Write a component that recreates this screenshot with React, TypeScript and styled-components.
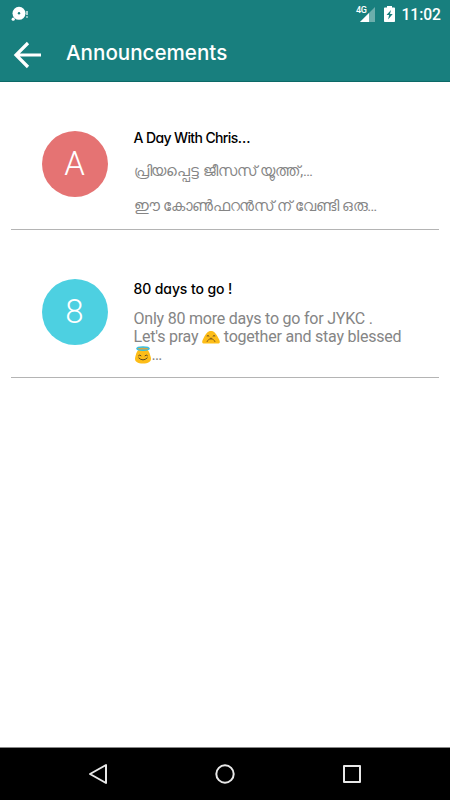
import React from 'react';
import styled, { createGlobalStyle } from 'styled-components';

const GlobalStyle = createGlobalStyle`
  * { box-sizing: border-box; }
  body { margin: 0; background: #fff; font-family: Roboto, sans-serif; }
`;

const Screen = styled.div`
  width: 450px;
  height: 800px;
  display: flex;
  flex-direction: column;
  overflow: hidden;
  background: #fff;
`;

const Header = styled.header`
  height: 82px;
  flex: none;
  background: #187f7e;
  border-bottom: 1px solid #0c6967;
  color: #fff;
`;

const StatusBar = styled.div`
  height: 28px;
  display: flex;
  align-items: center;
  padding: 0 9px 0 11px;
`;

const StatusIcons = styled.div`
  margin-left: auto;
  display: flex;
  align-items: center;
`;

const Network = styled.span`
  font-size: 9px;
  line-height: 9px;
  font-weight: 500;
  letter-spacing: -0.4px;
  margin: -7px -6px 0 0;
`;

const Battery = styled.svg`
  margin-left: 9px;
`;

const Clock = styled.time`
  font-size: 15.6px;
  line-height: 28px;
  font-weight: 500;
  margin: 1px 0 0 6px;
`;

const Toolbar = styled.div`
  height: 53px;
  display: flex;
  align-items: center;
  padding-left: 13px;
`;

const BackButton = styled.button`
  display: flex;
  padding: 0;
  border: 0;
  background: none;
  color: inherit;
`;

const Title = styled.h1`
  margin: -3px 0 0 24px;
  font: 500 20.6px/28px Inter, sans-serif;
`;

const List = styled.main`
  flex: 1;
  padding: 0 11px;
`;

const Row = styled.article`
  height: 148px;
  display: flex;
  padding-left: 30.5px;
  border-bottom: 1px solid #b4b4b4;
`;

const Avatar = styled.div<{ $color: string }>`
  width: 66px;
  height: 66px;
  flex: none;
  margin-top: 48.7px;
  border-radius: 50%;
  background: ${({ $color }) => $color};
  color: #fff;
  display: flex;
  align-items: center;
  justify-content: center;
  font-size: 33px;
  font-weight: 300;
`;

const Content = styled.div`
  margin-left: 26px;
  color: #858585;
`;

const Subject = styled.h2<{ $top: number; $spacing: number }>`
  margin: ${({ $top }) => $top}px 0 0;
  font: 500 14px/20px Inter, sans-serif;
  font-feature-settings: 'cv11';
  letter-spacing: ${({ $spacing }) => $spacing}px;
  color: #000;
`;

const Malayalam = styled.p<{ $size: number; $gap: number; $spacing: number }>`
  margin: ${({ $gap }) => $gap}px 0 0;
  font-size: ${({ $size }) => $size}px;
  line-height: 20px;
  letter-spacing: ${({ $spacing }) => $spacing}px;
  white-space: nowrap;
`;

const Message = styled.p`
  margin: 11px 0 0;
  font-size: 16px;
  line-height: 18px;
  letter-spacing: -0.22px;
  white-space: nowrap;
`;

const Emoji = styled.svg`
  display: inline-block;
  width: 18px;
  height: 18px;
  vertical-align: -4px;
`;

const NavBar = styled.nav`
  height: 53px;
  flex: none;
  display: flex;
  align-items: center;
  justify-content: space-between;
  padding: 0 87px;
  background: #000;
  border-top: 1px solid #888;
`;

const PrayEmoji = () => (
  <Emoji viewBox="0 0 18 18" role="img" aria-label="🙏">
    <path d="M9 3c3.200 0 5.200 2.500 7.600 7.500 2 3.900 1.400 5-1 5H2.400c-2.400 0-3-1.100-1-5C3.800 5.500 5.800 3 9 3Z" fill="#fdbd18" />
    <path d="M4.800 8.100q1.300-1 2.400.2M10.800 8.300q1.100-1.200 2.400-.2" fill="none" stroke="#543b20" strokeWidth=".9" />
    <path d="M5 13.900c.2-1.800 1.800-2 3.300-3.300M13 13.900c-.2-1.800-1.800-2-3.300-3.300M7.800 10.300h2.400M9 10.500V12" fill="none" stroke="#795313" strokeWidth=".9" />
  </Emoji>
);

const HaloEmoji = () => (
  <Emoji viewBox="0 0 18 18" role="img" aria-label="😇">
    <path d="M9 2c5 0 6.500 4 7.800 9.300C18 16 14 17.500 9 17.500S0 16 1.200 11.300C2.500 6 4 2 9 2Z" fill="#fdbd18" />
    <ellipse cx="9" cy="2.600" rx="6.100" ry="1.700" fill="#d9a640" stroke="#38bedf" strokeWidth="1.500" />
    <path d="M4.500 9.700q1.200-1.500 2.500 0M11 9.700q1.200-1.500 2.500 0M4.800 12q4.200 4 8.400 0" fill="none" stroke="#4e3b20" strokeWidth=".9" strokeLinecap="round" />
  </Emoji>
);

export default function App() {
  return (
    <Screen>
      <GlobalStyle />
      <Header>
        <StatusBar>
          <svg width="18" height="16" viewBox="0 0 18 16">
            <circle cx="8" cy="7.300" r="6.500" fill="#fff" />
            <circle cx="2.200" cy="13.200" r="1.600" fill="#fff" />
            <circle cx="8" cy="7.300" r="1.200" fill="#187f7e" />
            <path d="M16 5v4m0 1.300v1.500" stroke="#a6d0cf" strokeWidth="2" />
          </svg>
          <StatusIcons>
            <Network>4G</Network>
            <svg width="15" height="15" viewBox="0 0 15 15">
              <path d="M0 15 15 0v15Z" fill="#6caeac" />
              <path d="M0 15 9 6v9Z" fill="#fff" />
            </svg>
            <Battery width="11" height="16" viewBox="0 0 11 16">
              <path d="M3 0h5v1.500h2.200q.8 0 .8.800v12.900q0 .8-.8.800H.8q-.8 0-.8-.8V2.300q0-.8.800-.8H3Z" fill="#fff" />
              <path d="M7 4 2.500 9h2.600l-1 4.500L8.700 8H6Z" fill="#187f7e" />
            </Battery>
            <Clock>11:02</Clock>
          </StatusIcons>
        </StatusBar>
        <Toolbar>
          <BackButton aria-label="Back">
            <svg width="29" height="28" viewBox="0 0 29 28" fill="none" stroke="#fff" strokeWidth="3.200">
              <path d="M28 14H3M15 2 3 14l12 12" />
            </svg>
          </BackButton>
          <Title>Announcements</Title>
        </Toolbar>
      </Header>
      <List>
        <Row>
          <Avatar $color="#e57373">A</Avatar>
          <Content>
            <Subject $top={46} $spacing={-0.62}>A Day With Chris…</Subject>
            <Malayalam $size={14.7} $gap={13} $spacing={-0.05}>പ്രിയപ്പെട്ട ജീസസ് യൂത്ത്,…</Malayalam>
            <Malayalam $size={14.7} $gap={15} $spacing={-0.3}>ഈ കോൺഫറൻസ് ന് വേണ്ടി ഒരു…</Malayalam>
          </Content>
        </Row>
        <Row>
          <Avatar $color="#4dd0e1">8</Avatar>
          <Content>
            <Subject $top={49} $spacing={-0.1}>80 days to go !</Subject>
            <Message>
              Only 80 more days to go for JYKC .<br />
              Let's pray <PrayEmoji /> together and stay blessed<br />
              <HaloEmoji />…
            </Message>
          </Content>
        </Row>
      </List>
      <NavBar>
        <svg width="22" height="24" viewBox="0 0 22 24" fill="none" stroke="#e8e8e8" strokeWidth="2" strokeLinejoin="round">
          <path d="M19 3v18L3 12Z" />
        </svg>
        <svg width="22" height="22" viewBox="0 0 22 22" fill="none" stroke="#e8e8e8" strokeWidth="2">
          <circle cx="11" cy="11" r="8.700" />
        </svg>
        <svg width="22" height="22" viewBox="0 0 22 22" fill="none" stroke="#e8e8e8" strokeWidth="2" strokeLinejoin="round">
          <path d="M3 3h16v16H3Z" />
        </svg>
      </NavBar>
    </Screen>
  );
}
